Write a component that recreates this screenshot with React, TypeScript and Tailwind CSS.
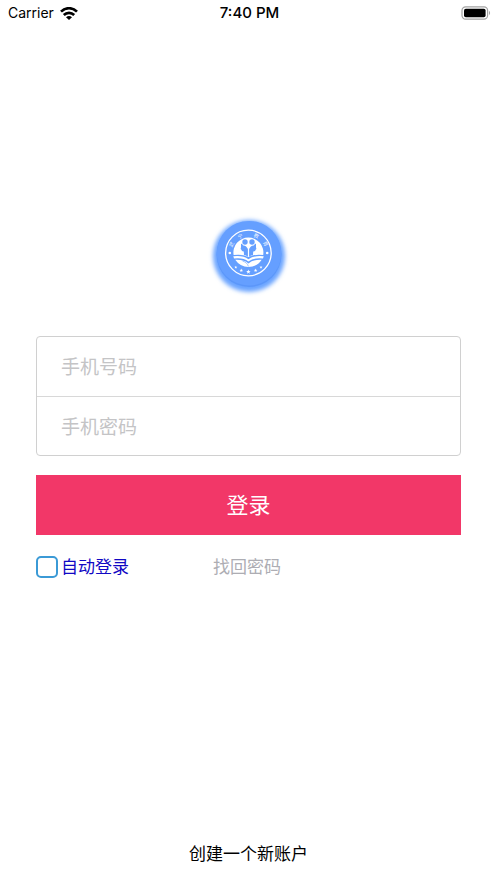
import React, { useState } from 'react';

const StatusBar: React.FC = () => (
  <header className="grid grid-cols-3 items-center h-[26px] pl-2 pr-[6px] text-black">
    <div className="flex items-center gap-[6px]">
      <span className="text-[14px] leading-[20px]">Carrier</span>
      <svg viewBox="0 0 18 13" className="w-[18px] h-[13px]" fill="none" stroke="currentColor" strokeWidth="2.7" aria-label="Wi-Fi">
        <path d="M1 4.6 C5.6 .1 12.4 .1 17 4.6" />
        <path d="M3.8 8 C6.8 5.1 11.2 5.1 14.2 8" />
        <path d="M6 10.2 Q9 7.6 12 10.2 L9 13Z" fill="currentColor" stroke="none" />
      </svg>
    </div>
    <time className="text-center text-[15px] leading-[20px] font-medium">7:40 PM</time>
    <svg viewBox="0 0 30 14" className="w-[30px] h-[14px] justify-self-end" aria-label="Battery">
      <rect x="1" y=".8" width="25.6" height="12.4" rx="3.6" fill="#fff" stroke="#a3a3a3" strokeWidth="1.2" />
      <rect x="3" y="2.8" width="21.6" height="8.4" rx="1.8" fill="#000" />
      <path d="M28 4.8 Q30.2 7 28 9.2Z" fill="#a3a3a3" />
    </svg>
  </header>
);

const Star: React.FC<{ x: number; y: number; r: number }> = ({ x, y, r }) => (
  <path
    transform={`translate(${x} ${y}) scale(${r})`}
    d="M0-1 .25-.33 .95-.31 .39.13 .59.81 0 .42-.59.81-.39.13-.95-.31-.25-.33Z"
    fill="#fff"
  />
);

const Logo: React.FC = () => (
  <svg viewBox="0 0 96 96" className="w-24 h-24" aria-label="Logo">
    <defs>
      <filter id="glow" x="-20%" y="-20%" width="140%" height="140%">
        <feGaussianBlur stdDeviation="2.2" />
      </filter>
      <filter id="soft" x="-20%" y="-20%" width="140%" height="140%">
        <feGaussianBlur stdDeviation=".6" />
      </filter>
    </defs>
    <circle cx="48" cy="48" r="36" fill="#6ba4ff" filter="url(#glow)" />
    <circle cx="48" cy="46.5" r="32.5" fill="#4f8cf5" opacity=".55" filter="url(#soft)" />
    <circle cx="48" cy="45.2" r="32.3" fill="#659fff" filter="url(#soft)" />
    <circle cx="47.4" cy="45" r="22.8" fill="none" stroke="#fff" strokeWidth="1.3" />

    <g fill="#fff" fillOpacity=".9" fontSize="5" textAnchor="middle" className="font-['Noto_Sans_CJK_SC',sans-serif]">
      <text transform="translate(32.2 37.4) rotate(-62)">武</text>
      <text transform="translate(40 30) rotate(-25)">宁</text>
      <text transform="translate(54.5 29.6) rotate(23)">教</text>
      <text transform="translate(63 36.6) rotate(60)">育</text>
    </g>
    <circle cx="28.8" cy="45" r="1.3" fill="#fff" />
    <circle cx="66.2" cy="45" r="1.3" fill="#fff" />

    {/* white disc with the two heads cut into it */}
    <path d="M32.6 47 A15 15 0 1 1 62.2 47 Q54 45.8 47.4 49 Q41 45.8 32.6 47Z" fill="#fff" />
    <g fill="#659fff">
      <circle cx="44" cy="34" r="2.7" />
      <circle cx="51" cy="34" r="2.7" />
      <path d="M40 35.8 Q41.2 35.6 42.3 37.4 Q45.6 37.8 46.9 41 L46.9 48.8 Q45 47.2 43 47 L42.8 43.6 Q40.6 43.8 40.4 41.8 Q39.2 41 40 39.6Z" />
      <path d="M55 35.8 Q53.8 35.6 52.7 37.4 Q49.4 37.8 48.1 41 L48.1 48.8 Q50 47.2 52 47 L52.2 43.6 Q54.4 43.8 54.6 41.8 Q55.8 41 55 39.6Z" />
    </g>

    <path d="M32.3 48.3 Q42 47.2 47.4 51.2 Q53.2 47.2 62.7 48.3 L62 50.5 Q53.2 49.3 47.4 53.4 Q42 49.3 33 50.5Z" fill="#fff" />
    <path d="M34.2 51.8 Q43.2 51.4 47.4 55.4 Q51.7 51.4 60.7 51.8 Q56 59 47.4 59 Q39.2 59 34.2 51.8Z" fill="#fff" />
    <path d="M41.5 53 Q46.5 54.5 47.4 58.5" fill="none" stroke="#659fff" strokeWidth=".6" />

    <Star x={34.8} y={59.3} r={1.6} />
    <Star x={40.3} y={62.5} r={1.9} />
    <Star x={47.4} y={63.8} r={2.4} />
    <Star x={54.6} y={62.5} r={1.9} />
    <Star x={60} y={59.3} r={1.6} />
  </svg>
);

export default function App() {
  const [phone, setPhone] = useState('');
  const [password, setPassword] = useState('');
  const [autoLogin, setAutoLogin] = useState(false);

  const inputClass = 'block w-full px-6 pt-[2px] text-[19px] text-black placeholder:text-[#c4c4c6] placeholder:opacity-100 outline-none bg-transparent';

  return (
    <div className="min-h-screen flex flex-col bg-white font-['Inter','Noto_Sans_CJK_SC',sans-serif]">
      <StatusBar />

      <main className="flex-1 flex flex-col px-9 pt-[182px]">
        <div className="flex justify-center">
          <Logo />
        </div>

        <form className="mt-8" onSubmit={(e) => e.preventDefault()}>
          <div className="border border-[#d0d0d0] rounded">
            <input
              type="tel"
              aria-label="手机号码"
              placeholder="手机号码"
              value={phone}
              onChange={(e) => setPhone(e.target.value)}
              className={`${inputClass} h-[60px] border-b border-[#d8d8d8]`}
            />
            <input
              type="password"
              aria-label="手机密码"
              placeholder="手机密码"
              value={password}
              onChange={(e) => setPassword(e.target.value)}
              className={`${inputClass} h-[58px]`}
            />
          </div>

          <button type="submit" className="mt-[19px] w-full h-[60px] bg-[#f23768] text-white text-[22px]">
            登录
          </button>

          <div className="mt-5 grid grid-cols-[5fr_7fr] items-center text-[17px] leading-6">
            <label className="flex items-center gap-[3px] text-[#1108c4]">
              <input
                type="checkbox"
                checked={autoLogin}
                onChange={(e) => setAutoLogin(e.target.checked)}
                className="appearance-none w-[22px] h-[22px] rounded-[5px] border-2 border-[#3b9ad6] bg-white checked:bg-[#3b9ad6]"
              />
              自动登录
            </label>
            <a href="#" className="justify-self-start text-[#adadb3]">找回密码</a>
          </div>
        </form>
      </main>

      <footer className="flex justify-center pb-[17px]">
        <a href="#" className="text-[17px] leading-6 text-black">创建一个新账户</a>
      </footer>
    </div>
  );
}
